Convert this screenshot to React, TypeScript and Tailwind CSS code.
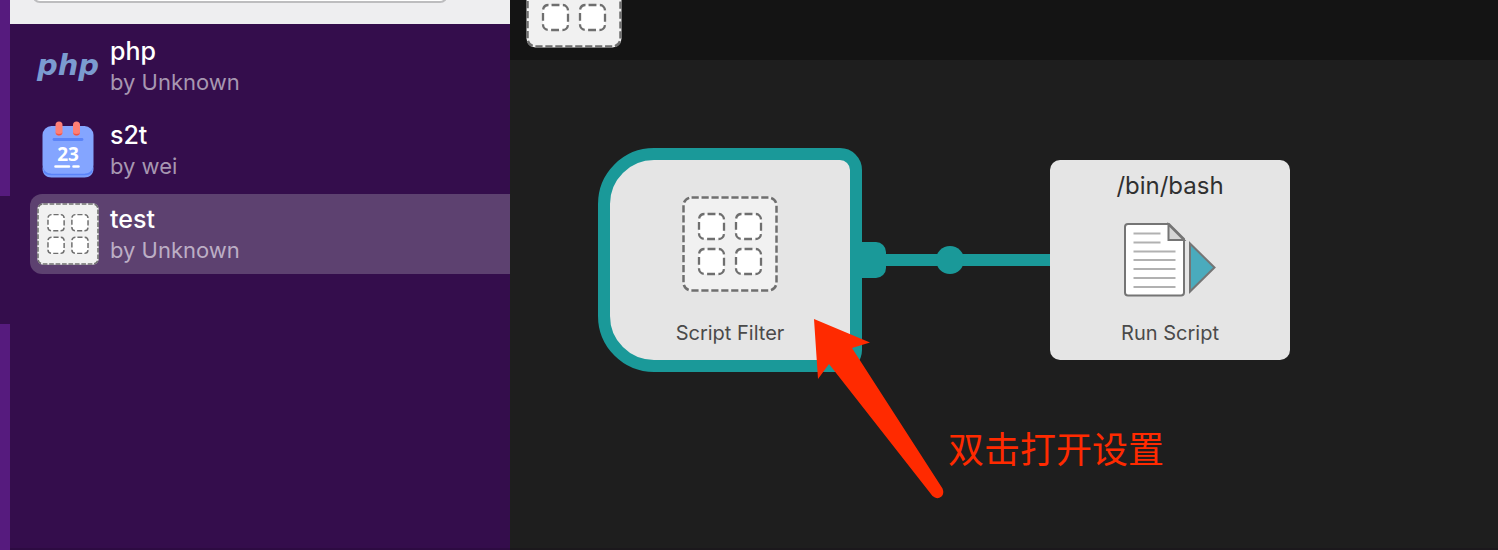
import type { ReactNode } from "react";

function GridIcon({ className }: { className: string }) {
  const cells = [
    [17, 18],
    [54, 18],
    [17, 53],
    [54, 53],
  ];
  return (
    <svg viewBox="0 0 96 96" className={className} aria-hidden="true">
      <rect x="0.5" y="0.5" width="95" height="95" rx="9" fill="#f1f1f1" />
      <rect
        x="1.5"
        y="1.5"
        width="93"
        height="93"
        rx="8"
        fill="none"
        stroke="#6f6f6f"
        strokeWidth="2.5"
        strokeDasharray="7.2 2.753"
        strokeDashoffset="9.88"
      />
      {cells.map(([x, y]) => (
        <rect
          key={`${x}-${y}`}
          x={x}
          y={y}
          width="25"
          height="25"
          rx="5.5"
          fill="#fff"
          stroke="#6f6f6f"
          strokeWidth="2.3"
          strokeDasharray="7.9 3.42"
          strokeDashoffset="8.27"
        />
      ))}
    </svg>
  );
}

function PhpIcon() {
  return (
    <span
      className="pb-0.5 font-['DejaVu_Sans',sans-serif] text-[29px] leading-8 font-bold text-[#7b9bd0] italic"
      aria-hidden="true"
    >
      php
    </span>
  );
}

function CalendarIcon() {
  return (
    <svg viewBox="0 -1 62 62" className="size-[62px]" aria-hidden="true">
      <rect x="6" y="8" width="50" height="49" rx="9" fill="#5b84f8" />
      <rect x="5.5" y="6" width="51" height="48" rx="9" fill="#84a5ff" />
      <path d="M5.5 45v4c0 5 4 8.500 9 8.500h33c5 0 9-3.500 9-8.500v-4c0 5-4 9-9 9h-33c-5 0-9-4-9-9z" fill="#7b9efc" />
      <path d="M7 51c2 3 4.500 3.500 7.500 3.500h33c3 0 5.500-.5 7.500-3.500" fill="none" stroke="#5b84f8" strokeWidth="1.500" />
      <path d="M17 19.500h28" stroke="#5b84f8" strokeWidth="2.800" strokeLinecap="round" />
      <rect x="18.500" y="1.500" width="7" height="14" rx="3.500" fill="#ff7f75" />
      <rect x="36" y="1.500" width="7" height="14" rx="3.500" fill="#ff7f75" />
      <path d="M18.500 11.500a3.500 4 0 0 0 7 0a3.500 2.500 0 0 1-7 0zM36 11.500a3.500 4 0 0 0 7 0a3.500 2.500 0 0 1-7 0z" fill="#ee5348" />
      <text x="31" y="40.500" textAnchor="middle" fill="#fff" fontFamily="Noto Sans" fontWeight="700" fontSize="19">
        23
      </text>
      <path d="M18.500 46.500h13.500M36.500 46.500h5" stroke="#fff" strokeWidth="2.600" strokeLinecap="round" />
    </svg>
  );
}

function ScriptIcon() {
  return (
    <svg viewBox="-1 0 96 76" className="h-[76px] w-24" aria-hidden="true">
      <path d="M5 2H46L61 17V70.500a3 3 0 0 1-3 3h-53a3 3 0 0 1-3-3v-65.500a3 3 0 0 1 3-3z" fill="#fff" stroke="#757575" strokeWidth="2" />
      <path d="M45.500 2.500v15.500h15.500z" fill="#d6d6d6" stroke="#757575" strokeWidth="2" />
      <path
        d="M10.500 11.500h27M10.500 20.500h27M10.500 29.500h42M10.500 38h42M10.500 47h42M10.500 56h42M10.500 65h42"
        stroke="#b1b1b1"
        strokeWidth="2"
      />
      <path d="M67 21.500L91.500 45.500L67 69.500z" fill="#4aabbd" stroke="#757575" strokeWidth="2" />
    </svg>
  );
}

type Workflow = { name: string; author: string; icon: ReactNode; selected?: boolean };

const workflows: Workflow[] = [
  { name: "php", author: "by Unknown", icon: <PhpIcon /> },
  { name: "s2t", author: "by wei", icon: <CalendarIcon /> },
  { name: "test", author: "by Unknown", icon: <GridIcon className="size-[62px]" />, selected: true },
];

function WorkflowRow({ name, author, icon, selected }: Workflow) {
  return (
    <li>
      <button
        type="button"
        aria-pressed={!!selected}
        className={`flex h-20 w-full items-center gap-[11px] rounded-l-xl pl-[7px] text-left ${selected ? "bg-[#5d4170]" : ""}`}
      >
        <span className="flex size-[62px] shrink-0 items-center justify-center">{icon}</span>
        <span className="flex flex-col">
          <span className="text-[25px] leading-8 font-medium text-white">{name}</span>
          <span className={`text-[22px] leading-[30px] ${selected ? "text-[#bcaec5]" : "text-[#a797b1]"}`}>{author}</span>
        </span>
      </button>
    </li>
  );
}

export default function App() {
  return (
    <div className="flex h-screen overflow-hidden bg-[#1e1e1e] font-['Inter',sans-serif]">
      <div className="flex w-[10px] shrink-0 flex-col bg-[#561b7e]">
        <div className="mt-[196px] h-32 bg-[#340d4c]" />
      </div>

      <aside className="flex w-[500px] shrink-0 flex-col border-b-2 border-[#2d0b42] bg-[#340d4c]">
        <div className="flex h-6 shrink-0 items-end overflow-hidden bg-[#eeeef0] pb-[21px] pl-[22px]">
          <input
            type="search"
            aria-label="Search workflows"
            className="h-10 w-[416px] shrink-0 rounded-lg border-2 border-[#bdbdbf] bg-white px-3 text-xl outline-none"
          />
        </div>
        <ul className="flex flex-col gap-1 pt-0.5 pl-5">
          {workflows.map((w) => (
            <WorkflowRow key={w.name} {...w} />
          ))}
        </ul>
      </aside>

      <main className="flex min-w-0 flex-1 flex-col border-b-2 border-[#1b181c]">
        <header className="flex h-[60px] shrink-0 items-end overflow-hidden bg-[#141414] pb-3 pl-4">
          <GridIcon className="size-24 shrink-0" />
        </header>

        <section className="relative flex-1 overflow-hidden">
          <div className="absolute top-[194px] left-[352px] h-3 w-[188px] bg-[#1a9999]" />
          <div className="absolute top-[182px] left-[352px] h-9 w-6 rounded-r-[10px] bg-[#1a9999]" />
          <div className="absolute top-[186px] left-[426px] size-7 rounded-full bg-[#1a9999]" />

          <button
            type="button"
            className="absolute top-[88px] left-[88px] flex h-[224px] w-[264px] flex-col items-center justify-between rounded-l-[56px] rounded-r-[22px] border-12 border-[#1a9999] bg-[#e5e5e5] pt-9 pb-[13px]"
          >
            <GridIcon className="size-24" />
            <span className="text-xl leading-7 text-[#4a4a4a]">Script Filter</span>
          </button>

          <button
            type="button"
            className="absolute top-[100px] left-[540px] flex h-[200px] w-60 flex-col items-center justify-between rounded-[10px] bg-[#e5e5e5] pt-3 pb-[13px]"
          >
            <span className="text-2xl leading-7 text-[#303030]">/bin/bash</span>
            <ScriptIcon />
            <span className="text-xl leading-7 text-[#4a4a4a]">Run Script</span>
          </button>

          <svg viewBox="0 0 132 182" className="absolute top-[258px] left-[303px] h-[182px] w-[132px]" aria-hidden="true">
            <path
              d="M1 1L57 24.500L39 30L129.500 170.500Q131.500 175.500 128.500 178.500Q124 182 119.500 178L16 46L5 61Z"
              fill="#ff2a00"
            />
          </svg>
          <p className="absolute top-[361px] left-[438px] font-['Noto_Sans_CJK_SC',sans-serif] text-4xl leading-[52px] whitespace-nowrap text-[#ff2a00]">
            双击打开设置
          </p>
        </section>
      </main>
    </div>
  );
}
